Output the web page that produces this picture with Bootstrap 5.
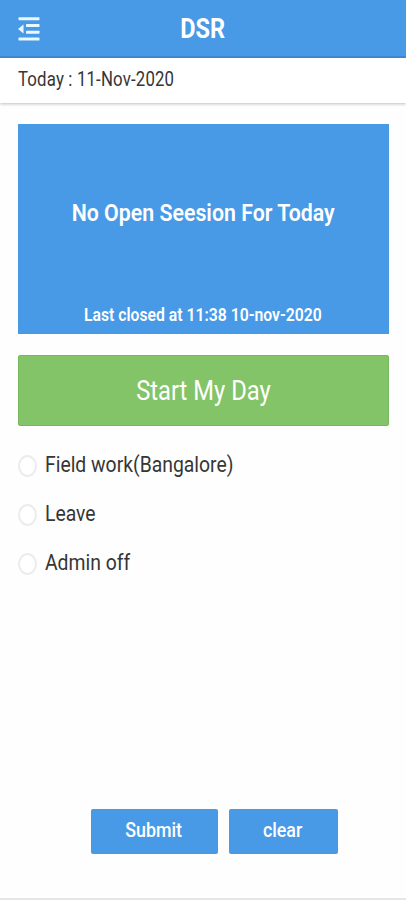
<!DOCTYPE html>
<html lang="en">
<head>
<meta charset="utf-8">
<meta name="viewport" content="width=device-width, initial-scale=1">
<title>DSR</title>
<link href="https://cdn.jsdelivr.net/npm/bootstrap@5.3.0/dist/css/bootstrap.min.css" rel="stylesheet">
<style>
body{font-family:Roboto,"Liberation Sans",sans-serif;background:#fefefe;color:#363636;height:900px;overflow:hidden}
.blue{background:#489ae6;color:#fff}
.topbar{height:58px;display:grid;grid-template-columns:1fr auto 1fr;padding:1px 18px 0;border-bottom:2px solid #3f8ad6}
.narrow{display:inline-block;white-space:nowrap;line-height:1;transform:scaleX(var(--sx,.87))}
.from-left{transform-origin:left center}
.title{font-size:28px;font-weight:700;--sx:.84}
.datebar{height:45px;padding:0 18px 2px;background:#fff;box-shadow:0 1px 3px rgba(0,0,0,.25)}
.date{font-size:21px;letter-spacing:.2px;--sx:.8}
main{padding:21px 17px 0 17.5px}
.session{height:210px;padding-top:77px;padding-bottom:10px}
.headline{font-size:24.5px;font-weight:600}
.closed{font-size:18px;font-weight:600;--sx:.875}
.start{height:71px;margin-top:21px;background:#84c468;border:1px solid #76b85e;border-radius:2px;color:#fff;padding:2px 0 0}
.start:hover{background:#84c468;color:#fff}
.start .narrow{font-size:27px;--sx:.88}
.choices{margin-top:14px}
.choice{height:49px;gap:8px}
.choice .form-check-input{width:19px;height:22px;margin:3px 0 0;border:2px solid #ececec;background:#fff;flex:none}
.choice .narrow{font-size:22.5px;--sx:.86}
.actions{height:45px;margin-top:222px;gap:11px;padding-left:73px}
.act{padding:0;border:0;border-radius:2px}
.act:hover{background:#489ae6;color:#fff}
.act .narrow{font-size:20.5px;font-weight:500}
.submit{width:127px}
.clear{width:109px}
.foot{height:2px;background:#e6e6e6;margin-top:44px}
</style>
</head>
<body>
<header class="topbar blue align-items-center">
  <svg width="22" height="26" viewBox="0 0 22 26" fill="#e9f7ff" aria-label="Menu"><rect x="0.5" y="1.2" width="21" height="3" rx=".6"/><rect x="8" y="8" width="13.5" height="3" rx=".6"/><rect x="8" y="14.7" width="13.5" height="3" rx=".6"/><rect x="0.5" y="21.5" width="21" height="3" rx=".6"/><path d="M0 13 5.5 8.5V17.5Z"/></svg>
  <h1 class="title narrow m-0">DSR</h1>
</header>
<div class="datebar d-flex align-items-center"><span class="narrow from-left date">Today : 11-Nov-2020</span></div>
<main>
  <section class="session blue d-flex flex-column align-items-center justify-content-between">
    <span class="narrow headline">No Open Seesion For Today</span>
    <span class="narrow closed">Last closed at 11:38 10-nov-2020</span>
  </section>
  <button class="start btn w-100 d-flex align-items-center justify-content-center" type="button"><span class="narrow">Start My Day</span></button>
  <form class="choices">
    <label class="choice d-flex align-items-center"><input class="form-check-input" type="radio" name="day"><span class="narrow from-left">Field work(Bangalore)</span></label>
    <label class="choice d-flex align-items-center"><input class="form-check-input" type="radio" name="day"><span class="narrow from-left">Leave</span></label>
    <label class="choice d-flex align-items-center"><input class="form-check-input" type="radio" name="day"><span class="narrow from-left">Admin off</span></label>
    <div class="actions d-flex">
      <button class="act btn blue submit" type="button"><span class="narrow">Submit</span></button>
      <button class="act btn blue clear" type="reset"><span class="narrow">clear</span></button>
    </div>
  </form>
</main>
<div class="foot"></div>
<script src="https://cdn.jsdelivr.net/npm/bootstrap@5.3.0/dist/js/bootstrap.bundle.min.js"></script>
</body>
</html>
